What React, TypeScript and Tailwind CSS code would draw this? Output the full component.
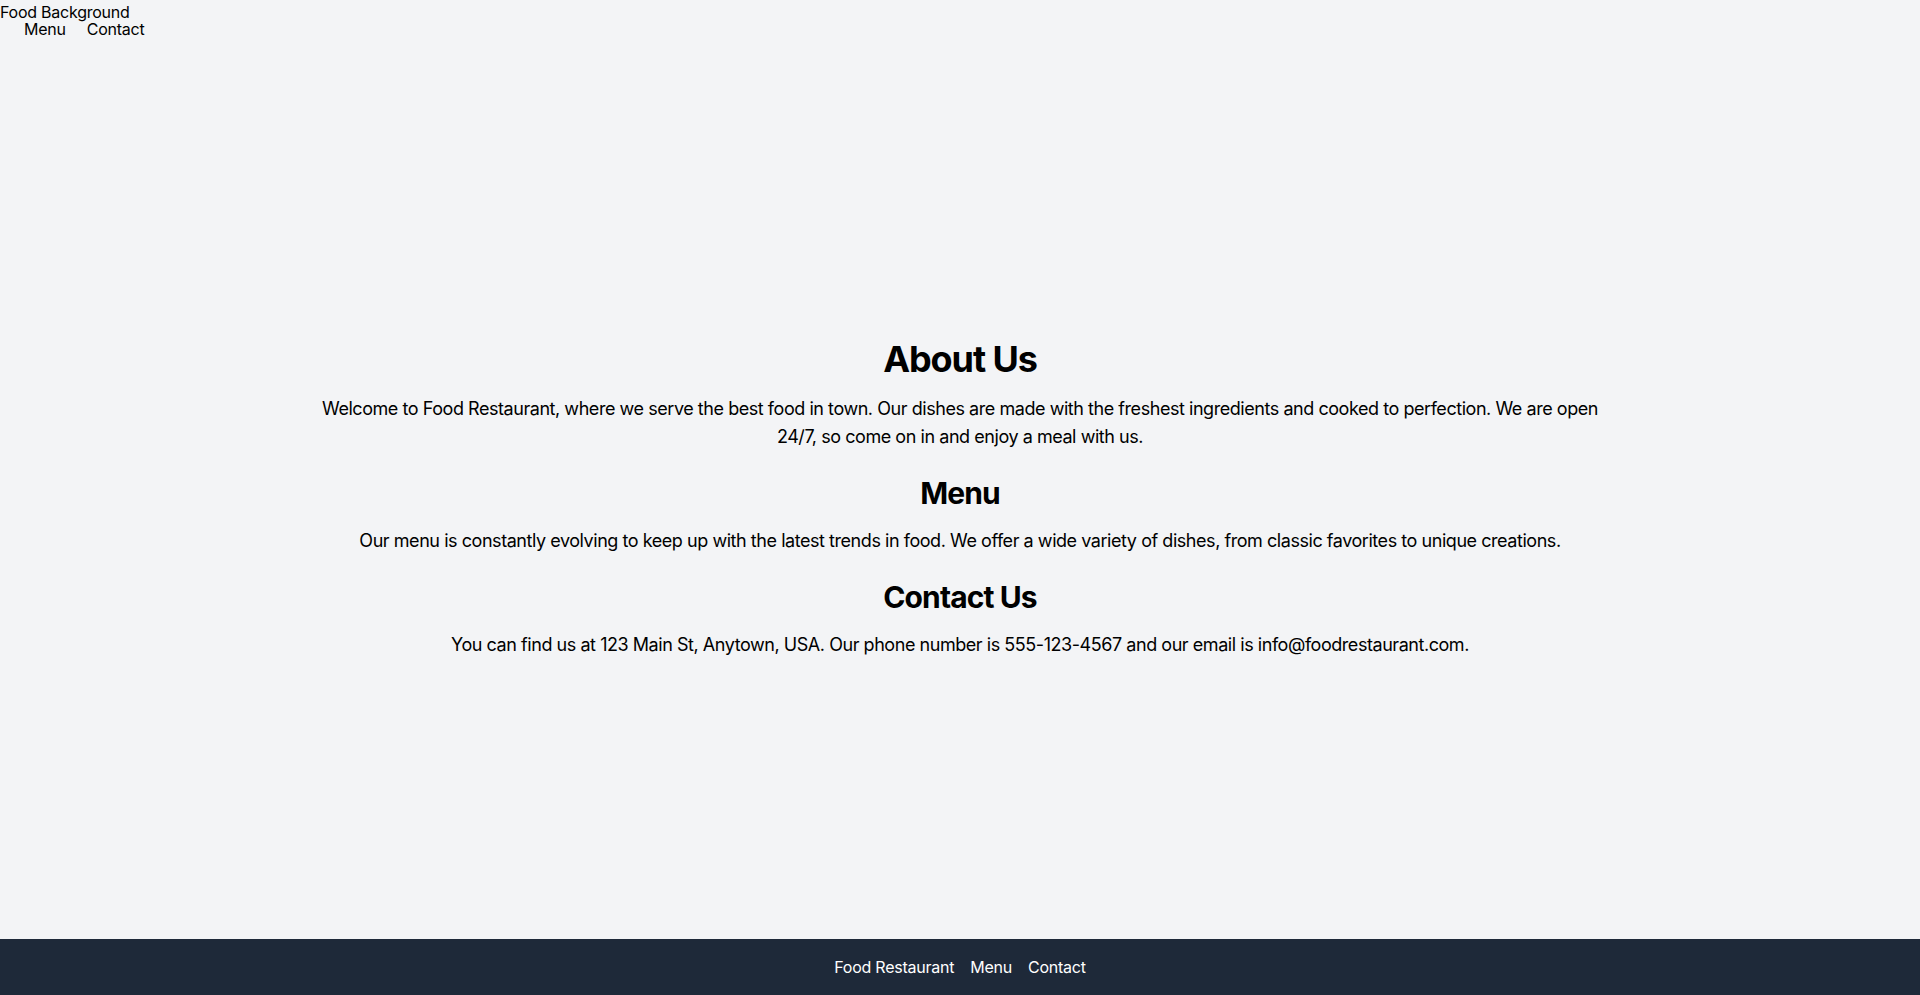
export default function App() {
  return (
    <div
      className="min-h-screen flex flex-col bg-gray-100 text-black"
      style={{ fontFamily: 'Inter, "Noto Sans", sans-serif' }}
    >
      <header className="h-[58px] text-base tracking-[-0.015em]">
        <div className="h-[19px] pt-[2px] leading-[20px]">Food Background</div>
        <nav>
          <ul className="flex pl-6 gap-[21px] leading-[20px]">
            <li>Menu</li>
            <li>Contact</li>
          </ul>
        </nav>
      </header>
      <main className="flex-1 flex items-center justify-center">
        <div className="max-w-7xl text-center">
          <section>
            <h2 className="text-4xl font-bold mb-4 tracking-[-0.03em]">About Us</h2>
            <p className="text-lg tracking-[-0.025em]">
              Welcome to Food Restaurant, where we serve the best food in town. Our dishes are made with the freshest ingredients and cooked to perfection. We are open 24/7, so come on in and enjoy a meal with us.
            </p>
          </section>
          <section className="mt-6">
            <h2 className="text-3xl font-bold mb-4 tracking-[-0.03em]">Menu</h2>
            <p className="text-lg tracking-[-0.025em]">
              Our menu is constantly evolving to keep up with the latest trends in food. We offer a wide variety of dishes, from classic favorites to unique creations.
            </p>
          </section>
          <section className="mt-6">
            <h2 className="text-3xl font-bold mb-4 tracking-[-0.03em]">Contact Us</h2>
            <p className="text-lg tracking-[-0.025em]">
              You can find us at 123 Main St, Anytown, USA. Our phone number is 555-123-4567 and our email is info@foodrestaurant.com.
            </p>
          </section>
        </div>
      </main>
      <footer className="bg-gray-800 text-white py-4">
        <ul className="flex justify-center gap-4 text-base leading-6 tracking-[-0.015em]">
          <li>Food Restaurant</li>
          <li>Menu</li>
          <li>Contact</li>
        </ul>
      </footer>
    </div>
  );
}
